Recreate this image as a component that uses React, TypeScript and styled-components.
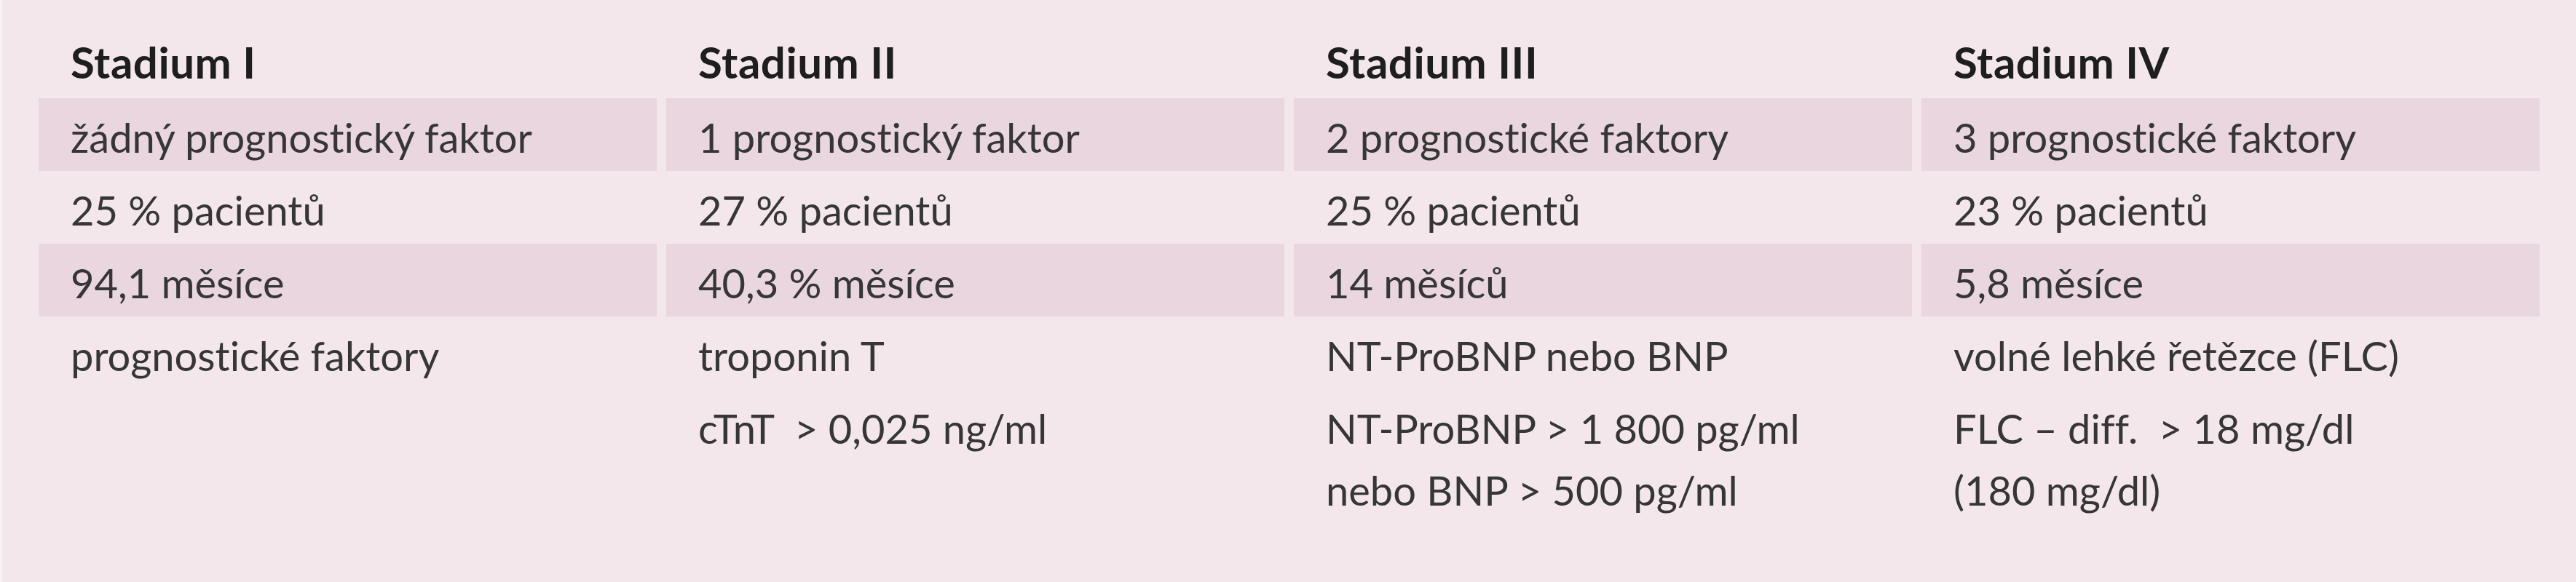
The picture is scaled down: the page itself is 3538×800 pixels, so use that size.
import React from "react";
import styled, { createGlobalStyle } from "styled-components";

const GlobalStyle = createGlobalStyle`
  html, body {
    margin: 0;
    padding: 0;
    background: #f3e7ec;
  }
  body {
    font-family: Lato, "Open Sans", "Liberation Sans", sans-serif;
    font-variant-ligatures: none;
    font-feature-settings: "liga" 0, "clig" 0;
  }
`;

const Page = styled.div`
  box-sizing: border-box;
  width: 3538px;
  min-height: 800px;
  background: #f3e7ec;
  border-left: 3px solid #f7f3f5;
  padding: 35px 0 0 50px;
`;

const Table = styled.div`
  display: grid;
  grid-template-columns: repeat(4, 849px);
  column-gap: 13px;
  row-gap: 0;
`;

const HeadCell = styled.div`
  box-sizing: border-box;
  height: 100px;
  padding: 8px 0 0 44px;
  font-family: Lato, "Open Sans", sans-serif;
  font-weight: 700;
  font-size: 60px;
  letter-spacing: 0.5px;
  line-height: 85px;
  color: #1e1e1e;
  white-space: nowrap;
  font-variant-ligatures: none;
`;

const Cell = styled.div<{ $shaded?: boolean }>`
  box-sizing: border-box;
  min-height: 100px;
  padding: 11px 0 0 44px;
  background: ${(p) => (p.$shaded ? "#e9d6de" : "transparent")};
  font-family: Lato, "Open Sans", sans-serif;
  font-weight: 400;
  font-size: 56px;
  line-height: 85px;
  color: #363636;
  white-space: nowrap;
  font-variant-ligatures: none;
  font-feature-settings: "liga" 0, "clig" 0;
`;

const Line = styled.div`
  display: block;
`;

const headers = ["Stadium I", "Stadium II", "Stadium III", "Stadium IV"];

const rows: { shaded: boolean; cells: string[][] }[] = [
  {
    shaded: true,
    cells: [
      ["žádný prognostický faktor"],
      ["1 prognostický faktor"],
      ["2 prognostické faktory"],
      ["3 prognostické faktory"],
    ],
  },
  {
    shaded: false,
    cells: [
      ["25 % pacientů"],
      ["27 % pacientů"],
      ["25 % pacientů"],
      ["23 % pacientů"],
    ],
  },
  {
    shaded: true,
    cells: [
      ["94,1 měsíce"],
      ["40,3 % měsíce"],
      ["14 měsíců"],
      ["5,8 měsíce"],
    ],
  },
  {
    shaded: false,
    cells: [
      ["prognostické faktory"],
      ["troponin T"],
      ["NT-ProBNP nebo BNP"],
      ["volné lehké řetězce (FLC)"],
    ],
  },
  {
    shaded: false,
    cells: [
      [],
      ["cTnT \u00a0> 0,025 ng/ml"],
      ["NT-ProBNP > 1\u00a0800 pg/ml", "nebo BNP > 500 pg/ml"],
      ["FLC – diff. \u00a0> 18 mg/dl", "(180 mg/dl)"],
    ],
  },
];

export default function App() {
  return (
    <>
      <GlobalStyle />
      <Page>
        <Table>
          {headers.map((h) => (
            <HeadCell key={h}>{h}</HeadCell>
          ))}
          {rows.map((row, ri) =>
            row.cells.map((lines, ci) => (
              <Cell key={`${ri}-${ci}`} $shaded={row.shaded}>
                {lines.map((l, li) => (
                  <Line key={li}>{l}</Line>
                ))}
              </Cell>
            ))
          )}
        </Table>
      </Page>
    </>
  );
}
